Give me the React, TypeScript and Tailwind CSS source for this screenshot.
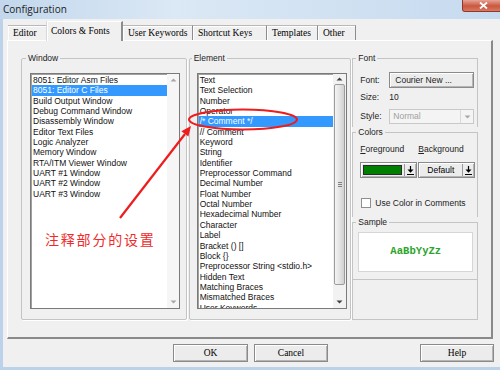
const windowItems = [
  "8051: Editor Asm Files",
  "8051: Editor C Files",
  "Build Output Window",
  "Debug Command Window",
  "Disassembly Window",
  "Editor Text Files",
  "Logic Analyzer",
  "Memory Window",
  "RTA/ITM Viewer Window",
  "UART #1 Window",
  "UART #2 Window",
  "UART #3 Window",
];

const elementItems = [
  "Text",
  "Text Selection",
  "Number",
  "Operator",
  "/* Comment */",
  "// Comment",
  "Keyword",
  "String",
  "Identifier",
  "Preprocessor Command",
  "Decimal Number",
  "Float Number",
  "Octal Number",
  "Hexadecimal Number",
  "Character",
  "Label",
  "Bracket () []",
  "Block {}",
  "Preprocessor String <stdio.h>",
  "Hidden Text",
  "Matching Braces",
  "Mismatched Braces",
  "User Keywords",
];

const tabs = [
  { label: "Editor", w: "w-[39px]" },
  { label: "Colors & Fonts", w: "w-[76px]", active: true },
  { label: "User Keywords", w: "w-[70px]" },
  { label: "Shortcut Keys", w: "w-[74px]" },
  { label: "Templates", w: "w-[51px]" },
  { label: "Other", w: "w-[38px]" },
];

function Arrow({ dir, color = "#404040" }: { dir: "up" | "down"; color?: string }) {
  return (
    <svg width="7" height="4" viewBox="0 0 7 4">
      {dir === "up" ? <path d="M0.5 3.5 L3.5 0.5 L6.5 3.5 Z" fill={color} /> : <path d="M0.5 0.5 L6.5 0.5 L3.5 3.5 Z" fill={color} />}
    </svg>
  );
}

function DropIcon() {
  return (
    <svg width="7" height="9" viewBox="0 0 7 9">
      <path d="M3.5 0 V4" stroke="#000" strokeWidth="1.2" />
      <path d="M0.5 3.5 H6.5 L3.5 6.8 Z" fill="#000" />
      <path d="M0 8.5 H7" stroke="#000" strokeWidth="1" />
    </svg>
  );
}

function ListBox({ items, selected, active }: { items: string[]; selected: number; active?: boolean }) {
  return (
    <div className="flex h-[236px] w-[150px] border border-[#7a7a7a] bg-white shadow-[inset_1px_1px_0_#a0a0a0]">
      <div className="flex-1 overflow-hidden pl-[1px] pt-[1px]">
        {items.map((it, i) => (
          <div
            key={it}
            className={
              "h-[10.35px] whitespace-nowrap pl-[1px] text-[8.5px] leading-[10.35px] " +
              (i === selected ? "bg-[#3399ff] text-white" : "text-[#111]")
            }
          >
            {it}
          </div>
        ))}
      </div>
      {active ? (
        <div className="flex w-[13px] flex-col items-center bg-[#f2f2f2]">
          <div className="flex h-[10px] items-center justify-center">
            <Arrow dir="up" />
          </div>
          <div className="relative h-[201px] w-[11px] rounded-[2px] border border-[#9c9c9c] bg-[linear-gradient(to_right,#f4f4f4,#e4e4e4_50%,#d2d2d2)]">
            <div className="absolute left-[3px] top-[97px] flex w-[4px] flex-col gap-[1px]">
              <div className="h-px bg-[#808080]" />
              <div className="h-px bg-[#808080]" />
              <div className="h-px bg-[#808080]" />
            </div>
          </div>
          <div className="flex-1" />
          <div className="flex h-[12px] items-center justify-center">
            <Arrow dir="down" />
          </div>
        </div>
      ) : (
        <div className="flex w-[12px] flex-col items-center bg-[#f6f6f6]">
          <div className="flex h-[12px] items-center justify-center">
            <Arrow dir="up" color="#a6a6a6" />
          </div>
          <div className="flex-1" />
          <div className="flex h-[12px] items-center justify-center">
            <Arrow dir="down" color="#a6a6a6" />
          </div>
        </div>
      )}
    </div>
  );
}

const groupBorder = "border-[#c4c4c4]";
const legend = "px-[2px] text-[8.5px] leading-[11px] text-[#222]";
const raised =
  "border border-[#8a8a8a] bg-[#ececec] shadow-[inset_1px_1px_0_#fff,inset_-1px_-1px_0_#b5b5b5]";

export default function App() {
  return (
    <div className="relative flex h-[370px] w-[500px] flex-col overflow-hidden bg-[#f0f0f0] font-['Liberation_Sans',Arial,sans-serif]">
      {/* title bar */}
      <div className="flex h-[19px] shrink-0 items-start justify-between bg-[linear-gradient(to_right,#c2d7ed,#dbe8f5_35%,#d3e3f3_60%,#c6daef)]">
        <span className="pl-[3px] pt-[2px] font-['Open_Sans',sans-serif] text-[10px] leading-[14px] text-[#1c1c1c]">
          Configuration
        </span>
        <div className="mr-[-4px] flex h-[12px] w-[42px] items-center justify-center rounded-b-[3px] border border-t-0 border-[#93372a] bg-[linear-gradient(#e8a395,#c9573f_55%,#d87a62)]">
          <svg width="9" height="7" viewBox="0 0 9 7">
            <path d="M1 0.5 L8 6.5 M8 0.5 L1 6.5" stroke="#fff" strokeWidth="1.8" />
          </svg>
        </div>
      </div>

      {/* client */}
      <div className="flex flex-1 flex-col border-b-[3px] border-l-[3px] border-[#bcd2ea] bg-[#f0f0f0]">
        {/* tabs */}
        <div className="relative z-10 ml-[5px] mt-[3px] flex h-[18px] items-end font-['Liberation_Serif','Times_New_Roman',serif] text-[9.5px] text-black">
          {tabs.map((t) =>
            t.active ? (
              <div
                key={t.label}
                className={`${t.w} mb-[-1px] h-[20px] whitespace-nowrap border-l border-r-2 border-t border-l-white border-r-[#8c8c8c] border-t-white bg-[#f0f0f0] px-[3px] pt-[2px] leading-[14px] shadow-[-1px_0_0_#d8d8d8]`}
              >
                {t.label}
              </div>
            ) : (
              <div
                key={t.label}
                className={`${t.w} h-[15px] whitespace-nowrap border-r border-t border-r-[#8c8c8c] border-t-[#b8b8b8] px-[5px] leading-[14px] shadow-[inset_0_1px_0_#fff,inset_1px_0_0_#fff]`}
              >
                {t.label}
              </div>
            )
          )}
        </div>

        {/* tab panel */}
        <div className="ml-[4px] flex h-[299px] w-[486px] border-b-2 border-l border-r-2 border-t border-b-[#8a8a8a] border-l-white border-r-[#8a8a8a] border-t-white px-[13px] pt-[12px]">
          {/* Window */}
          <fieldset className={`h-[267px] w-[166px] rounded-[2px] border ${groupBorder} shadow-[1px_1px_0_#fff]`}>
            <legend className={`ml-[4px] ${legend}`}>Window</legend>
            <div className="ml-[8px] mt-[9px]">
              <ListBox items={windowItems} selected={1} />
            </div>
          </fieldset>

          {/* Element */}
          <fieldset className={`ml-[2px] h-[267px] w-[163px] rounded-[2px] border ${groupBorder} shadow-[1px_1px_0_#fff]`}>
            <legend className={`ml-[2px] ${legend}`}>Element</legend>
            <div className="ml-[7px] mt-[9px]">
              <ListBox items={elementItems} selected={4} active />
            </div>
          </fieldset>

          {/* right column */}
          <div className="ml-[1px] flex w-[126px] flex-col text-[8.5px] text-[#222]">
            <fieldset className={`h-[74px] border-x border-t ${groupBorder} pl-[7px]`}>
              <legend className={`-ml-[4px] ${legend}`}>Font</legend>
              <div className="mt-[8px] flex h-[16px] items-center">
                <span className="w-[29px]">Font:</span>
                <div className={`flex h-[16px] w-[85px] items-center pl-[5px] ${raised}`}>Courier New ...</div>
              </div>
              <div className="mt-[3px] flex h-[12px] items-center">
                <span className="w-[29px]">Size:</span>
                <span>10</span>
              </div>
              <div className="mt-[6px] flex h-[15px] items-center">
                <span className="w-[29px]">Style:</span>
                <div className="flex h-[15px] w-[85px] items-center border border-[#c9c9c9] bg-[#f4f4f4]">
                  <span className="flex-1 pl-[3px] text-[#a0a0a0]">Normal</span>
                  <div className="flex h-full w-[13px] items-center justify-center border-l border-[#dadada]">
                    <Arrow dir="down" color="#a8a8a8" />
                  </div>
                </div>
              </div>
            </fieldset>

            <fieldset className={`h-[90px] border-x border-t ${groupBorder} pl-[7px]`}>
              <legend className={`-ml-[4px] ${legend}`}>Colors</legend>
              <div className="mt-[6px] flex h-[11px] items-center leading-[11px]">
                <span className="w-[58px]">
                  <u>F</u>oreground
                </span>
                <span>
                  <u>B</u>ackground
                </span>
              </div>
              <div className="mt-[7px] flex gap-[1px]">
                <div className={`flex h-[16px] w-[57px] items-center ${raised}`}>
                  <div className="ml-[2px] h-[10px] w-[39px] border border-[#2b2b2b] bg-[#008000]" />
                  <div className="ml-[2px] h-[12px] w-px bg-[#9a9a9a]" />
                  <div className="flex flex-1 justify-center">
                    <DropIcon />
                  </div>
                </div>
                <div className={`flex h-[16px] w-[57px] items-center ${raised}`}>
                  <span className="flex-1 text-center text-black">Default</span>
                  <div className="h-[12px] w-px bg-[#9a9a9a]" />
                  <div className="flex w-[11px] justify-center">
                    <DropIcon />
                  </div>
                </div>
              </div>
              <div className="mt-[20px] flex h-[10px] items-center">
                <div className="ml-[1px] h-[10px] w-[10px] border border-[#8e8f8f] bg-white" />
                <span className="ml-[4px] leading-[10px]">Use Color in Comments</span>
              </div>
            </fieldset>

            <fieldset className={`h-[62px] border-x border-t ${groupBorder} pl-[5px]`}>
              <legend className={`-ml-[2px] ${legend}`}>Sample</legend>
              <div className="mt-[4px] flex h-[40px] w-[115px] items-center justify-center border border-[#d6d6d6] bg-white font-['Liberation_Mono','Courier_New',monospace] text-[10.6px] font-bold text-[#2aa52a]">
                AaBbYyZz
              </div>
            </fieldset>

            <div className={`h-[41px] border ${groupBorder}`} />
          </div>
        </div>

        {/* buttons */}
        <div className="mt-[5px] flex font-['Liberation_Serif','Times_New_Roman',serif] text-[9.5px] text-black">
          <div className={`ml-[170px] flex h-[18px] w-[75px] items-center justify-center ${raised}`}>OK</div>
          <div className={`ml-[6px] flex h-[18px] w-[74px] items-center justify-center ${raised}`}>Cancel</div>
          <div className={`ml-[92px] flex h-[18px] w-[74px] items-center justify-center ${raised}`}>Help</div>
        </div>
      </div>

      {/* annotation overlay */}
      <svg className="pointer-events-none absolute left-0 top-0" width="500" height="370" viewBox="0 0 500 370">
        <ellipse cx="243" cy="119.5" rx="54" ry="10" fill="none" stroke="#ee1c1c" strokeWidth="2" />
        <line x1="120" y1="218" x2="185" y2="134" stroke="#ee1c1c" strokeWidth="2.2" />
        <polygon points="191,126 188.4,136.6 181.4,131.2" fill="#ee1c1c" />
      </svg>
      <span className="pointer-events-none absolute left-[45px] top-[232px] font-['Noto_Sans_CJK_SC',sans-serif] text-[14px] leading-[14px] tracking-[1.8px] text-[#ee2a2a]">
        注释部分的设置
      </span>
    </div>
  );
}
